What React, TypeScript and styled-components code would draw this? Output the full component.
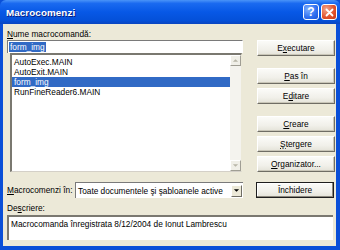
import * as React from "react";
import styled, {createGlobalStyle} from "styled-components";

const GlobalStyle = createGlobalStyle`
  html, body {
    margin: 0;
    padding: 0;
    background: #ffffff;
  }
  body {
    font-family: "Liberation Sans", Arial, sans-serif;
    font-size: 8.3px;
    color: #000000;
  }
`

const macros = ["AutoExec.MAIN", "AutoExit.MAIN", "form_img", "RunFineReader6.MAIN"]
const selected = "form_img"

function Accel(props: {text: string, at: number}) {
    const {text, at} = props
    return (
        <>
            {text.slice(0, at)}<u>{text.charAt(at)}</u>{text.slice(at + 1)}
        </>
    )
}

function ArrowIcon(props: {dir: "up" | "down", dark?: boolean}) {
    const points = props.dir === "up" ? "1,4 4,1 7,4" : "1,1 4,4 7,1"
    return (
        <svg width="7" height="5" viewBox="0 0 8 5">
            <polygon points={points} fill={props.dark ? "#000000" : "#b8b6a8"}/>
        </svg>
    )
}

export default function App() {
    return (
        <>
            <GlobalStyle/>
            <Window>
                <TitleBar>
                    <Title>Macrocomenzi</Title>
                    <TitleButtons>
                        <CaptionButton $kind="help">?</CaptionButton>
                        <CaptionButton $kind="close">
                            <svg width="9" height="9" viewBox="0 0 9 9">
                                <path d="M1.5 1.5 L7.5 7.5 M7.5 1.5 L1.5 7.5" stroke="#ffffff" strokeWidth="1.8"
                                      strokeLinecap="round"/>
                            </svg>
                        </CaptionButton>
                    </TitleButtons>
                </TitleBar>
                <Body>
                    <TopRow>
                        <LeftColumn>
                            <Label><Accel text="Nume macrocomandă:" at={0}/></Label>
                            <NameInput>
                                <SelectedText>form_img</SelectedText>
                            </NameInput>
                            <ListBox>
                                <ListItems>
                                    {macros.map(m => (
                                        <ListItem key={m} $selected={m === selected}>{m}</ListItem>
                                    ))}
                                </ListItems>
                                <ScrollBar>
                                    <ScrollArrow><ArrowIcon dir="up"/></ScrollArrow>
                                    <ScrollArrow><ArrowIcon dir="down"/></ScrollArrow>
                                </ScrollBar>
                            </ListBox>
                        </LeftColumn>
                        <ButtonColumn>
                            <Button><Accel text="Executare" at={1}/></Button>
                            <ButtonGroup>
                                <Button><Accel text="Pas în" at={0}/></Button>
                                <Button><Accel text="Editare" at={1}/></Button>
                            </ButtonGroup>
                            <ButtonGroup>
                                <Button><Accel text="Creare" at={0}/></Button>
                                <Button><Accel text="Ştergere" at={0}/></Button>
                                <Button><Accel text="Organizator..." at={0}/></Button>
                            </ButtonGroup>
                        </ButtonColumn>
                    </TopRow>
                    <ScopeRow>
                        <ScopeLabel><Accel text="Macrocomenzi în:" at={0}/></ScopeLabel>
                        <Dropdown>
                            <DropdownText>Toate documentele şi şabloanele active</DropdownText>
                            <DropdownArrow><ArrowIcon dir="down" dark/></DropdownArrow>
                        </Dropdown>
                        <Button $default>Închidere</Button>
                    </ScopeRow>
                    <DescLabel><Accel text="Descriere:" at={2}/></DescLabel>
                    <Description>Macrocomanda înregistrata 8/12/2004 de Ionut Lambrescu</Description>
                </Body>
            </Window>
        </>
    )
}

const Window = styled.div`
  width: 340px;
  height: 250px;
  display: flex;
  flex-direction: column;
  background: #0a4fd8;
  box-sizing: border-box;
`

const TitleBar = styled.div`
  height: 24px;
  flex: none;
  display: flex;
  align-items: center;
  justify-content: space-between;
  padding: 0 3px 0 6px;
  background: linear-gradient(180deg, #4a94f8 0%, #1a6af0 14%, #0758e6 50%, #0450d8 86%, #0a45c0 100%);
  border-radius: 6px 6px 0 0;
`

const Title = styled.div`
  color: #ffffff;
  font-weight: bold;
  font-size: 9.8px;
  letter-spacing: 0.1px;
  text-shadow: 1px 1px 0 #0a1f80;
`

const TitleButtons = styled.div`
  display: flex;
  gap: 2px;
`

const CaptionButton = styled.div<{ $kind: "help" | "close" }>`
  width: 16px;
  height: 16px;
  box-sizing: border-box;
  border: 1px solid #ffffff;
  border-radius: 3px;
  display: flex;
  align-items: center;
  justify-content: center;
  color: #ffffff;
  font-weight: bold;
  font-size: 12px;
  background: ${p => p.$kind === "close"
          ? "radial-gradient(circle at 30% 30%, #f3a58a, #e0502a 60%, #c53a18)"
          : "radial-gradient(circle at 30% 30%, #7fb0ff, #2f6ff0 60%, #1a52d8)"};
`

const Body = styled.div`
  flex: 1;
  display: flex;
  flex-direction: column;
  background: #ece9d8;
  margin: 0 4px 4px 3px;
  padding: 4px 1px 5px 4px;
`

const TopRow = styled.div`
  display: flex;
  justify-content: space-between;
`

const LeftColumn = styled.div`
  width: 236px;
  display: flex;
  flex-direction: column;
`

const Label = styled.div`
  height: 12px;
  line-height: 12px;
`

const DescLabel = styled(Label)`
  margin-top: 4px;
`

const NameInput = styled.div`
  height: 13px;
  box-sizing: border-box;
  background: #ffffff;
  border-top: 1px solid #7a7a7a;
  border-left: 1px solid #7a7a7a;
  border-right: 1px solid #ffffff;
  display: flex;
  align-items: center;
  padding-left: 1px;
`

const SelectedText = styled.span`
  background: #316ac5;
  color: #ffffff;
  line-height: 10px;
  padding: 0 1px;
`

const ListBox = styled.div`
  margin-left: 3px;
  margin-right: 1px;
  height: 119px;
  box-sizing: border-box;
  background: #ffffff;
  border-top: 2px solid #7a7870;
  border-left: 2px solid #7a7870;
  border-right: 1px solid #ece9d8;
  border-bottom: 1px solid #d4d0c8;
  display: flex;
`

const ListItems = styled.div`
  flex: 1;
  padding-top: 2px;
`

const ListItem = styled.div<{ $selected?: boolean }>`
  height: 10px;
  line-height: 10px;
  padding-left: 2px;
  background: ${p => p.$selected ? "#316ac5" : "transparent"};
  color: ${p => p.$selected ? "#ffffff" : "#000000"};
`

const ScrollBar = styled.div`
  width: 11px;
  display: flex;
  flex-direction: column;
  justify-content: space-between;
  background: #f4f3ee;
`

const ScrollArrow = styled.div`
  height: 11px;
  box-sizing: border-box;
  background: #f0efe8;
  border: 1px solid;
  border-color: #ffffff #a09e94 #a09e94 #ffffff;
  display: flex;
  align-items: center;
  justify-content: center;
`

const ButtonColumn = styled.div`
  width: 78px;
  padding-top: 12px;
  display: flex;
  flex-direction: column;
  gap: 12px;
`

const ButtonGroup = styled.div`
  display: flex;
  flex-direction: column;
  gap: 4px;
`

const Button = styled.div<{ $default?: boolean }>`
  width: 78px;
  height: 16px;
  flex: none;
  box-sizing: border-box;
  display: flex;
  align-items: center;
  justify-content: center;
  background: linear-gradient(180deg, #fbfbf8 0%, #f1f0ea 60%, #e4e2d8 100%);
  border: 1px solid;
  border-color: ${p => p.$default ? "#1e1e1e" : "#ffffff #6f6d64 #6f6d64 #ffffff"};
  box-shadow: ${p => p.$default ? "inset -1px -1px 0 #8a877c, inset 1px 1px 0 #ffffff" : "inset -1px -1px 0 #c9c6b8"};
`

const ScopeRow = styled.div`
  display: flex;
  align-items: center;
  margin-top: 10px;
  height: 16px;
`

const ScopeLabel = styled.div`
  width: 68px;
  flex: none;
  white-space: nowrap;
`

const Dropdown = styled.div`
  width: 168px;
  height: 16px;
  flex: none;
  box-sizing: border-box;
  background: #ffffff;
  border-top: 1px solid #7a7a7a;
  border-left: 1px solid #7a7a7a;
  display: flex;
  align-items: center;
  margin-right: 13px;
`

const DropdownText = styled.div`
  flex: 1;
  padding-left: 2px;
  white-space: nowrap;
  overflow: hidden;
`

const DropdownArrow = styled.div`
  width: 11px;
  height: 12px;
  box-sizing: border-box;
  margin-right: 1px;
  background: #ece9d8;
  border: 1px solid;
  border-color: #ffffff #6f6d64 #6f6d64 #ffffff;
  display: flex;
  align-items: center;
  justify-content: center;
`

const Description = styled.div`
  margin-top: 1px;
  flex: 1;
  margin-bottom: 1px;
  box-sizing: border-box;
  margin-right: 2px;
  background: #ffffff;
  border-top: 2px solid #7a7870;
  border-left: 2px solid #7a7870;
  padding: 2px 0 0 2px;
`
